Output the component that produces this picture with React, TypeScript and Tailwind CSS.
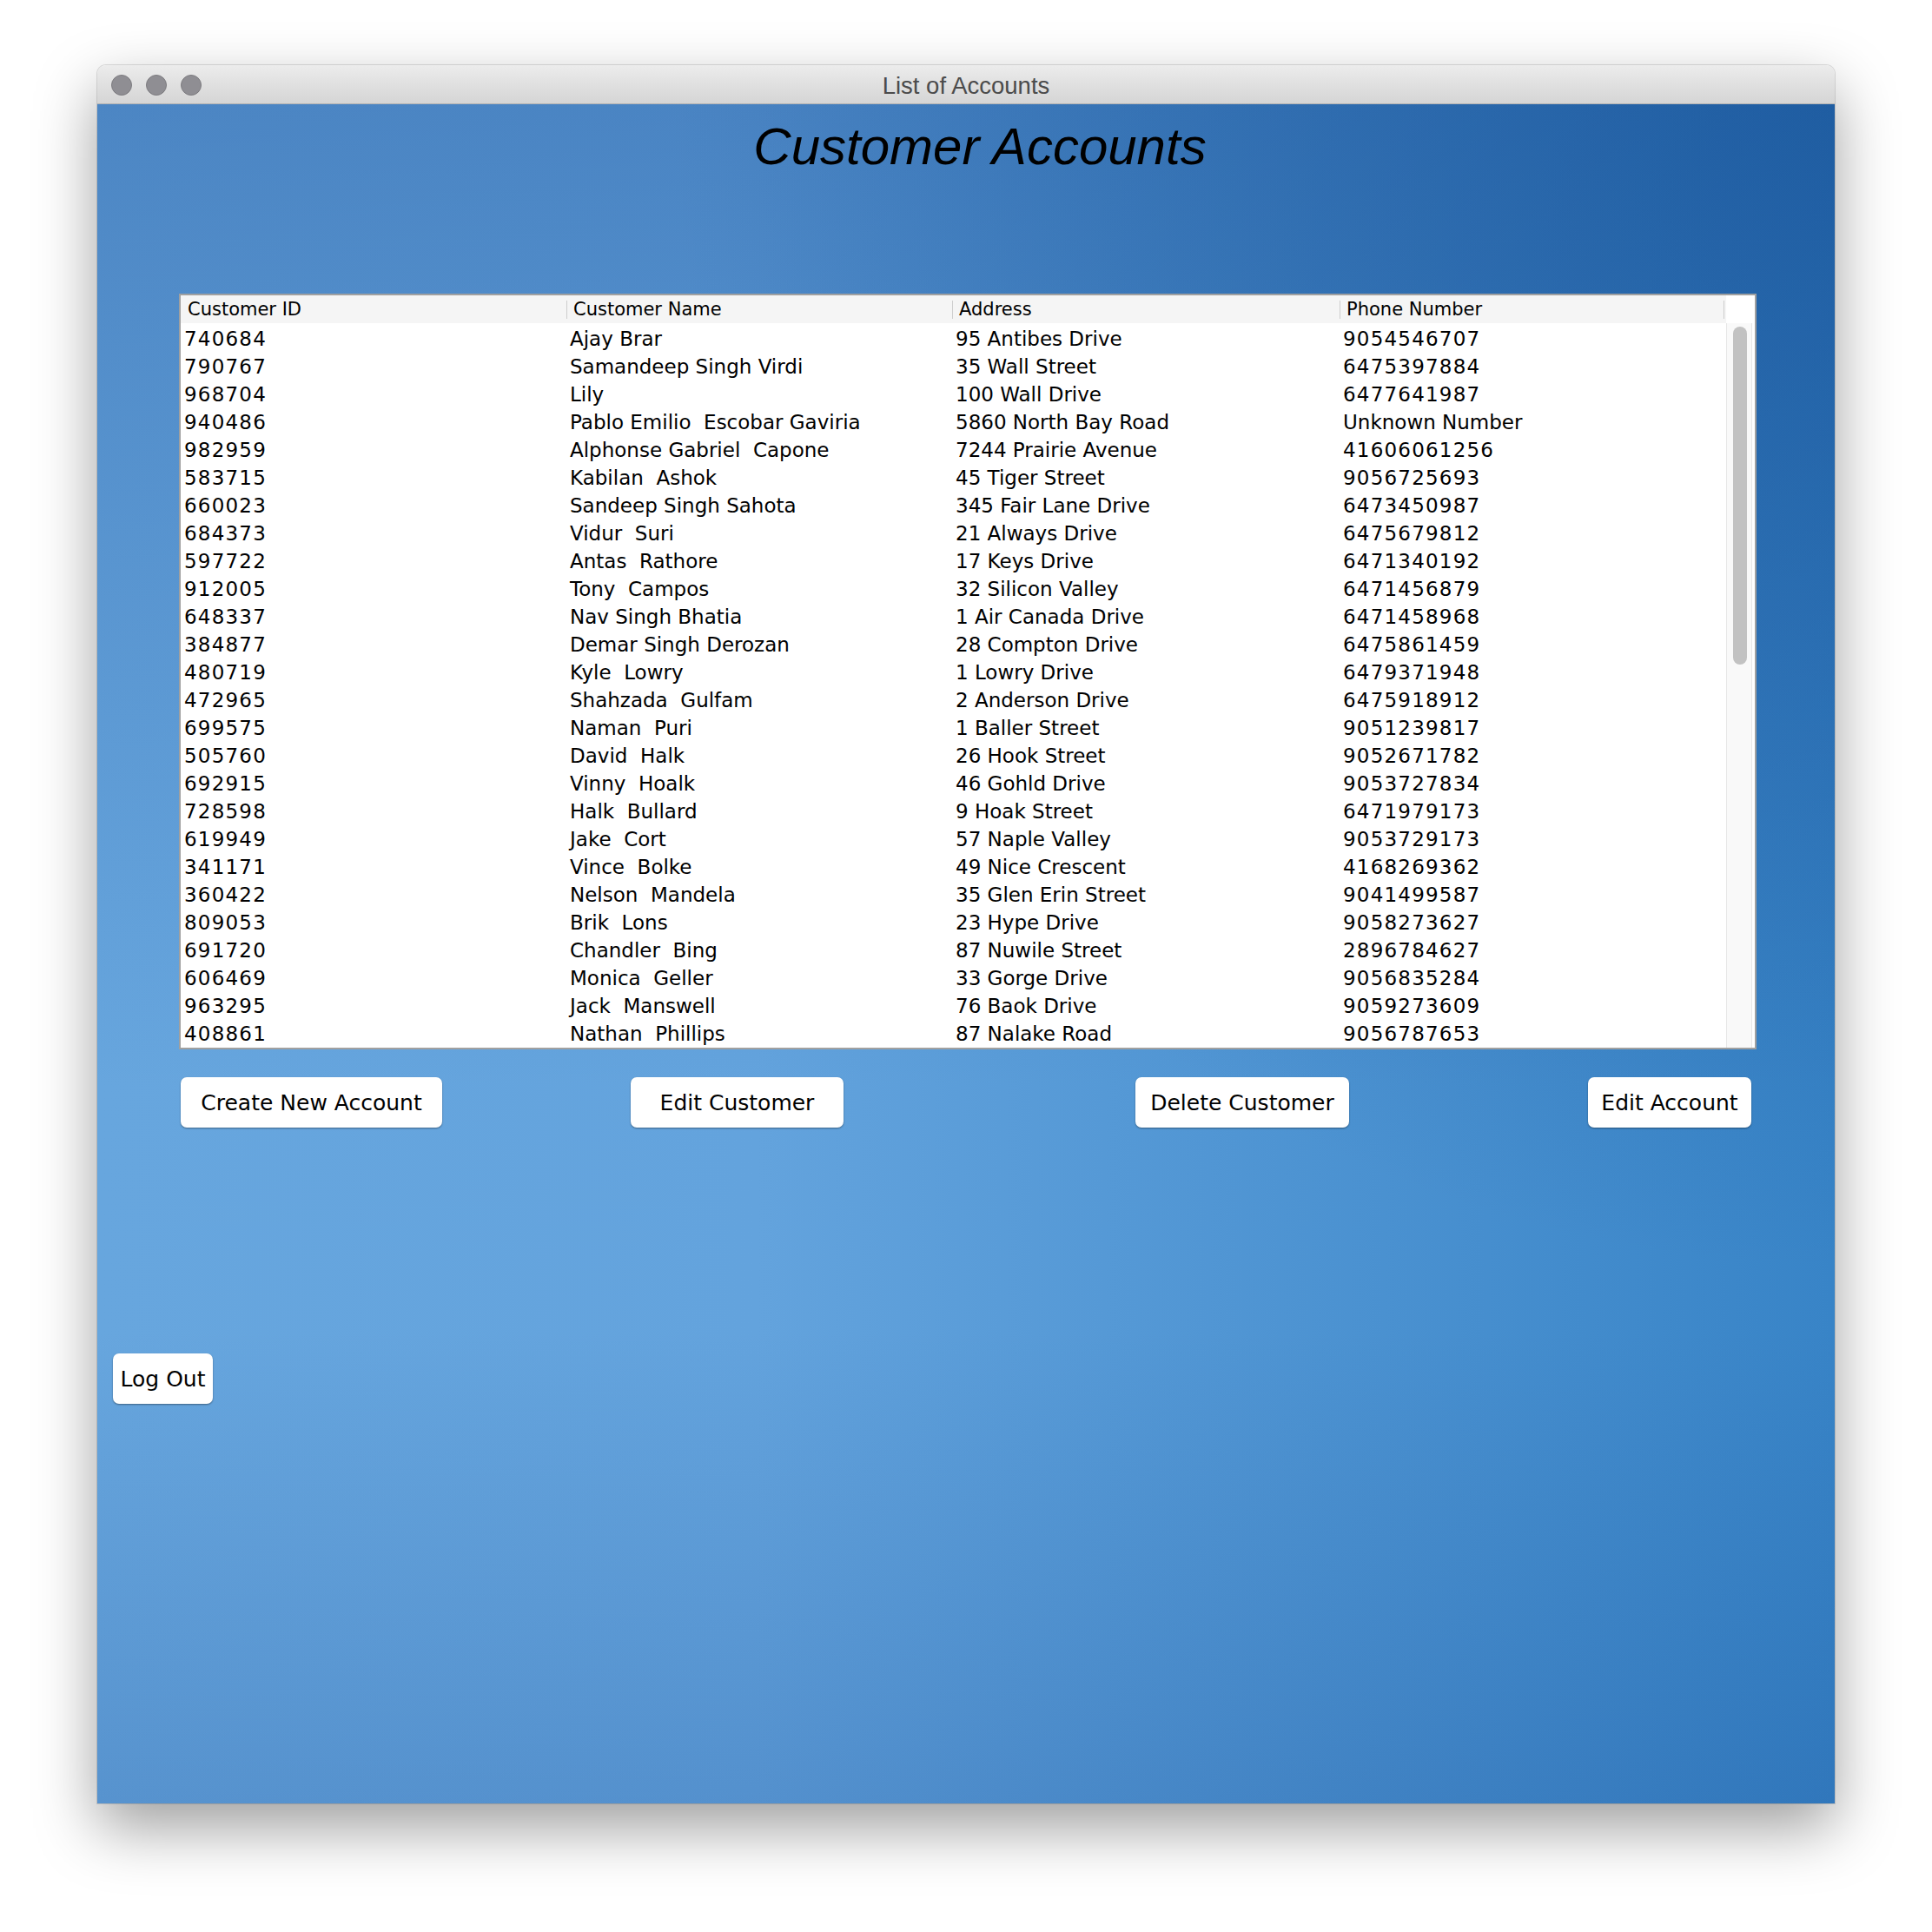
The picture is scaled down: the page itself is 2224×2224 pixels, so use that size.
const rows = [
	["740684", "Ajay Brar", "95 Antibes Drive", "9054546707"],
	["790767", "Samandeep Singh Virdi", "35 Wall Street", "6475397884"],
	["968704", "Lily", "100 Wall Drive", "6477641987"],
	["940486", "Pablo Emilio  Escobar Gaviria", "5860 North Bay Road", "Unknown Number"],
	["982959", "Alphonse Gabriel  Capone", "7244 Prairie Avenue", "41606061256"],
	["583715", "Kabilan  Ashok", "45 Tiger Street", "9056725693"],
	["660023", "Sandeep Singh Sahota", "345 Fair Lane Drive", "6473450987"],
	["684373", "Vidur  Suri", "21 Always Drive", "6475679812"],
	["597722", "Antas  Rathore", "17 Keys Drive", "6471340192"],
	["912005", "Tony  Campos", "32 Silicon Valley", "6471456879"],
	["648337", "Nav Singh Bhatia", "1 Air Canada Drive", "6471458968"],
	["384877", "Demar Singh Derozan", "28 Compton Drive", "6475861459"],
	["480719", "Kyle  Lowry", "1 Lowry Drive", "6479371948"],
	["472965", "Shahzada  Gulfam", "2 Anderson Drive", "6475918912"],
	["699575", "Naman  Puri", "1 Baller Street", "9051239817"],
	["505760", "David  Halk", "26 Hook Street", "9052671782"],
	["692915", "Vinny  Hoalk", "46 Gohld Drive", "9053727834"],
	["728598", "Halk  Bullard", "9 Hoak Street", "6471979173"],
	["619949", "Jake  Cort", "57 Naple Valley", "9053729173"],
	["341171", "Vince  Bolke", "49 Nice Crescent", "4168269362"],
	["360422", "Nelson  Mandela", "35 Glen Erin Street", "9041499587"],
	["809053", "Brik  Lons", "23 Hype Drive", "9058273627"],
	["691720", "Chandler  Bing", "87 Nuwile Street", "2896784627"],
	["606469", "Monica  Geller", "33 Gorge Drive", "9056835284"],
	["963295", "Jack  Manswell", "76 Baok Drive", "9059273609"],
	["408861", "Nathan  Phillips", "87 Nalake Road", "9056787653"],
];

const columns = ["Customer ID", "Customer Name", "Address", "Phone Number"];

// digits in the original font run wider than DejaVu's, so numeric cells get a bit of tracking
const isNumber = (s: string) => /^\d+$/.test(s);

function SwingButton({ label, width }: { label: string; width: string }) {
	return (
		<button
			className={`${width} h-[58px] shrink-0 rounded-[7px] bg-white pt-[2px] text-center text-[25px] leading-[56px] text-black shadow-[0_1px_2px_rgba(0,0,0,0.4)]`}
		>
			{label}
		</button>
	);
}

export default function App() {
	return (
		<div className="w-[2224px] h-[2224px] bg-white pl-[112px] pt-[75px] font-['DejaVu_Sans',sans-serif]">
			<div className="w-[2000px] h-[2001px] rounded-t-[10px] overflow-hidden shadow-[0_0_0_1px_rgba(0,0,0,0.12),0_28px_70px_rgba(0,0,0,0.38)]">
				{/* title bar */}
				<div className="h-[45px] grid grid-cols-[1fr_auto_1fr] items-center bg-gradient-to-b from-[#ececec] to-[#d5d5d5] border-b border-[#b3b3b3]">
					<div className="flex gap-[16px] pl-[16px]">
						<span className="w-[24px] h-[24px] rounded-full bg-[#8f8e93] border border-[#7d7c80]" />
						<span className="w-[24px] h-[24px] rounded-full bg-[#8f8e93] border border-[#7d7c80]" />
						<span className="w-[24px] h-[24px] rounded-full bg-[#8f8e93] border border-[#7d7c80]" />
					</div>
					<span className="pt-[2px] font-['Liberation_Sans',sans-serif] text-[27.5px] leading-[43px] text-[#4b4b4b]">List of Accounts</span>
					<div />
				</div>

				{/* content */}
				<div className="h-[1956px] flex flex-col bg-[image:radial-gradient(circle_at_100%_0%,rgba(16,72,140,0.45)_0%,rgba(16,72,140,0)_48%),linear-gradient(to_bottom,rgba(14,60,135,0.3)_0%,rgba(14,60,135,0)_58%,rgba(14,60,135,0)_72%,rgba(14,60,135,0.18)_100%),linear-gradient(to_right,#67a6de_0%,#63a3dd_38%,#3884c7_100%)]">
					<h1 className="mt-[19px] pl-[32px] text-center font-['Liberation_Sans',sans-serif] italic text-[60px] leading-[60px] text-black">
						Customer Accounts
					</h1>

					{/* table */}
					<div className="ml-[94px] mt-[139px] w-[1816px] h-[870px] border-2 border-[#a0a0a0] bg-white flex overflow-hidden">
						<div className="w-[1779px] flex flex-col">
							<div className="h-[32px] flex bg-[#f5f5f5] text-[21px] leading-[32px] text-black shrink-0">
								{columns.map((col, i) => (
									<div key={col} className={`${i === 3 ? "w-[442px]" : i === 2 ? "w-[446px]" : "w-[444px]"} flex items-center`}>
										{i > 0 && <span className="w-px h-[21px] bg-[#cdcdcd]" />}
										<span className={i > 0 ? "pl-[7px]" : "pl-[8px]"}>{col}</span>
									</div>
								))}
								<span className="self-center w-px h-[21px] bg-[#cdcdcd]" />
							</div>
							<div className="flex-1 overflow-hidden">
								{rows.map((row) => (
									<div key={row[0]} className="h-[32px] flex text-[23px] leading-[36px] text-black">
										{row.map((cell, j) => (
											<div
												key={j}
												className={`${j === 3 ? "w-[442px]" : j === 2 ? "w-[446px]" : "w-[444px]"} pl-[4px] whitespace-pre ${isNumber(cell) ? "tracking-[1.2px]" : ""}`}
											>
												{cell}
											</div>
										))}
									</div>
								))}
							</div>
						</div>
						<div className="w-[33px] flex flex-col">
							<div className="h-[32px] shrink-0" />
							<div className="flex-1 w-[30px] bg-[#f9f9f9] border-l border-r border-[#e7e7e7] pl-[7px] pt-[4px]">
								<div className="w-[16px] h-[389px] rounded-full bg-[#c2c2c2]" />
							</div>
						</div>
					</div>

					{/* action buttons */}
					<div className="mt-[32px] pl-[96px] flex">
						<SwingButton label="Create New Account" width="w-[301px]" />
						<div className="ml-[217px]"><SwingButton label="Edit Customer" width="w-[245px]" /></div>
						<div className="ml-[336px]"><SwingButton label="Delete Customer" width="w-[246px]" /></div>
						<div className="ml-[275px]"><SwingButton label="Edit Account" width="w-[188px]" /></div>
					</div>

					<div className="mt-[260px] pl-[18px]">
						<SwingButton label="Log Out" width="w-[115px]" />
					</div>
				</div>
			</div>
		</div>
	);
}
